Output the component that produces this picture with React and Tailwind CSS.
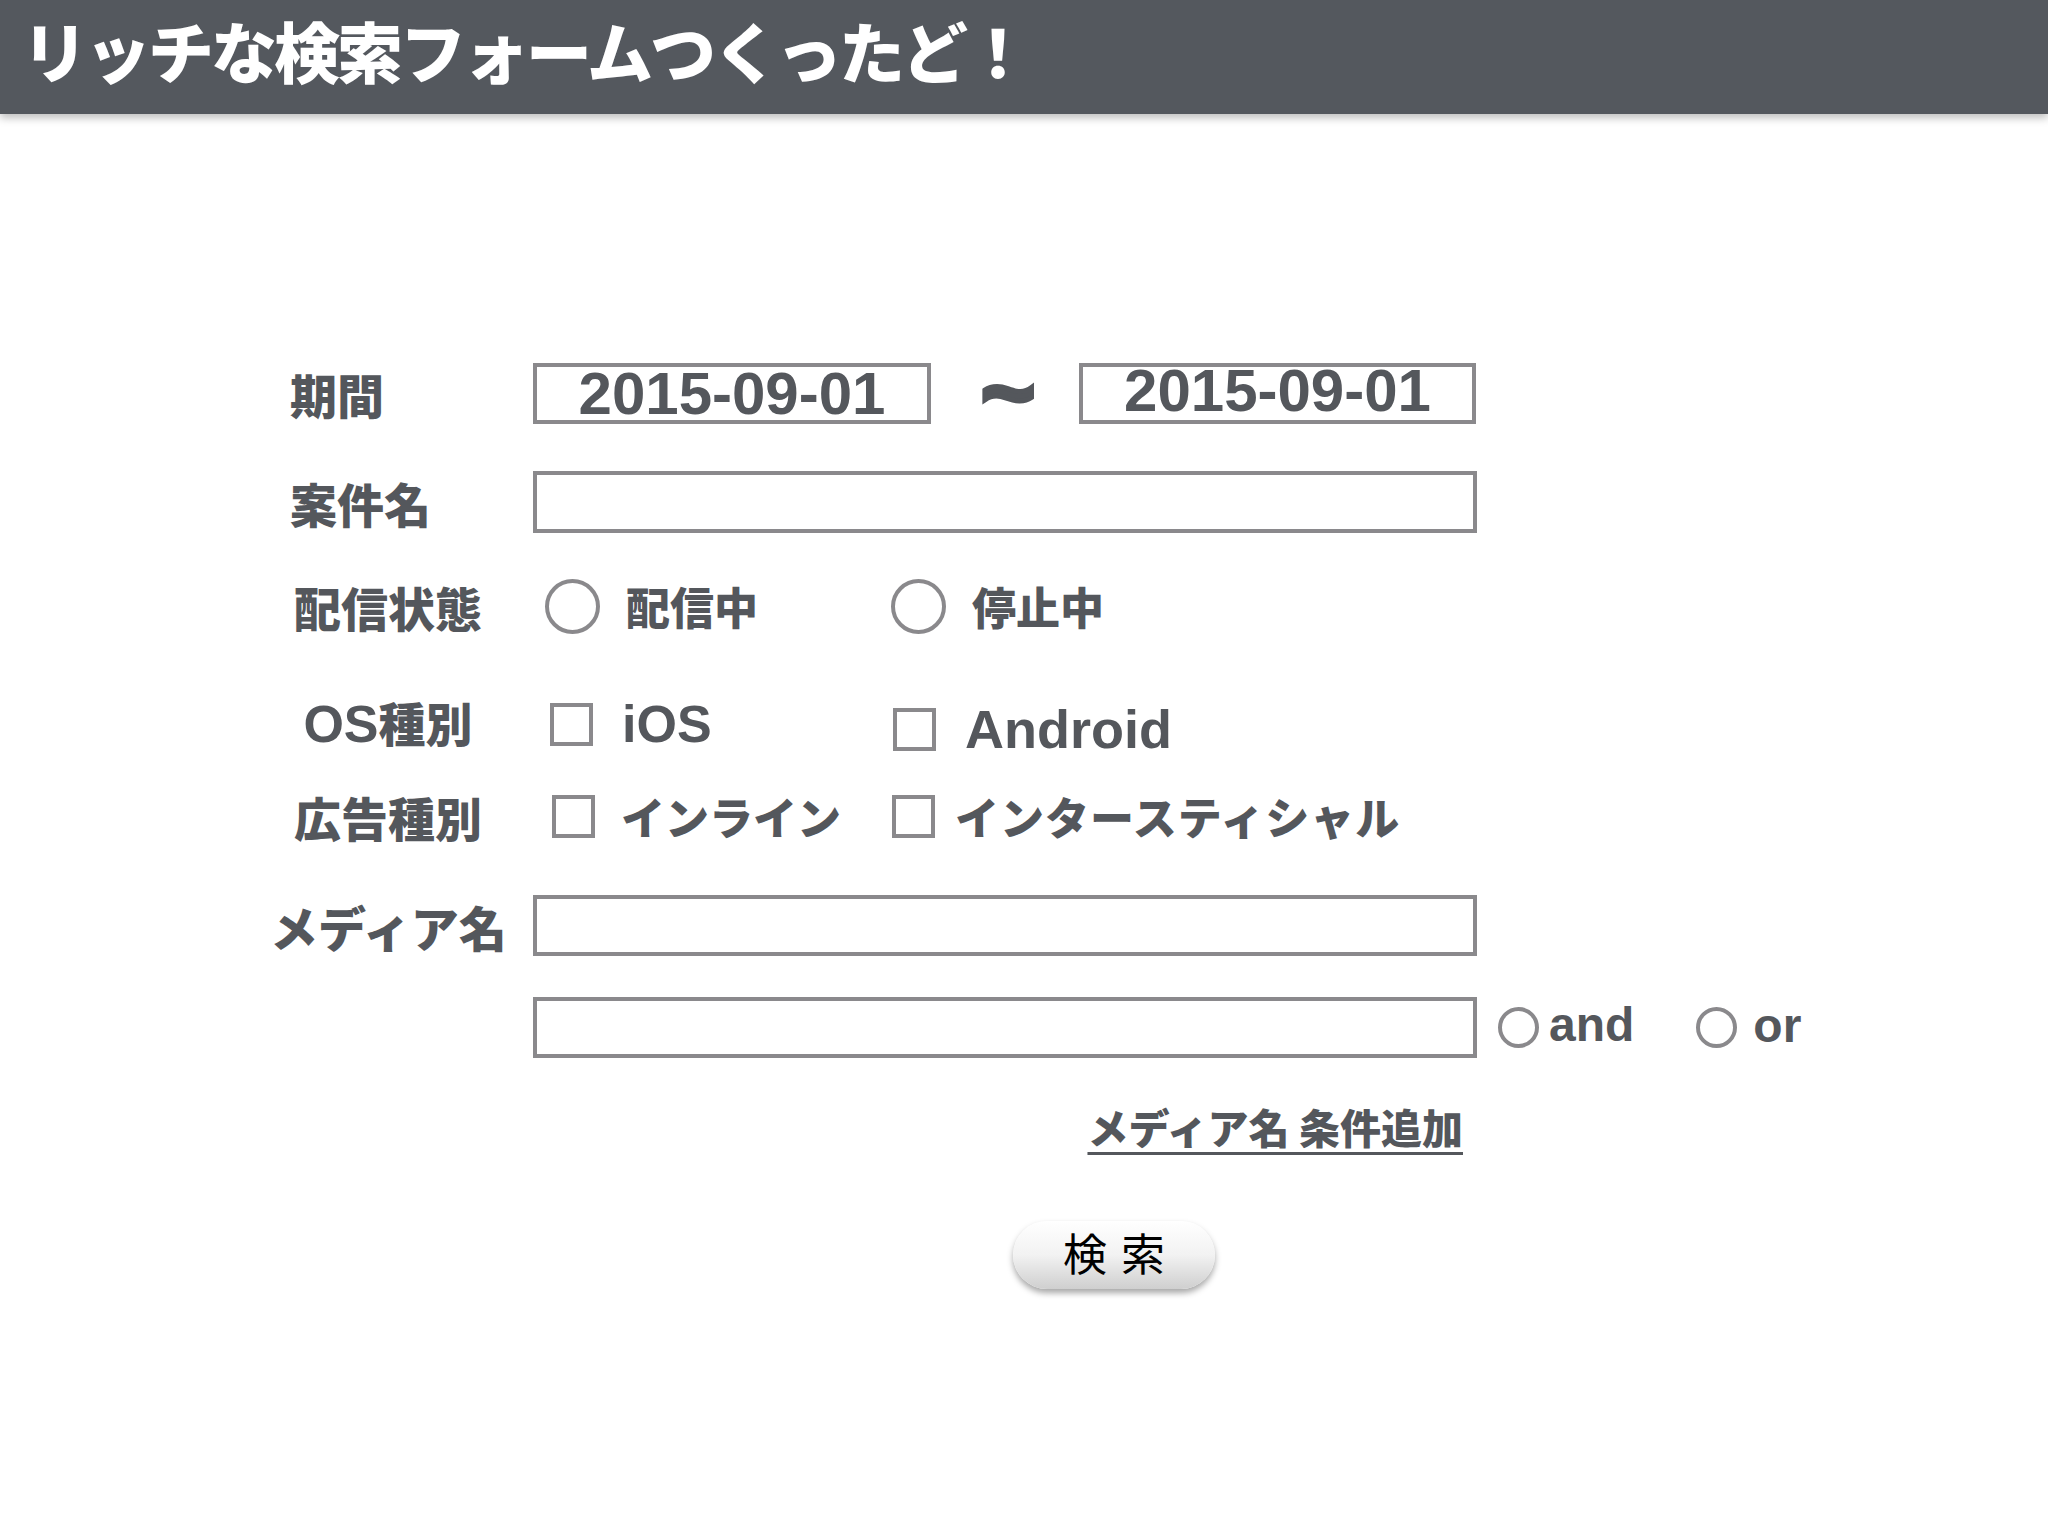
const jp = { fontFamily: '"Noto Sans CJK JP", "Noto Sans", sans-serif' }
const latin = { fontFamily: '"Liberation Sans", Arial, sans-serif' }

function Radio({ size = 'lg' }) {
  return (
    <span
      className={
        size === 'lg'
          ? 'inline-block w-[55px] h-[55px] rounded-full border-[4px] border-[#8a898c] bg-white shrink-0'
          : 'inline-block w-[41px] h-[41px] rounded-full border-[4px] border-[#8a898c] bg-white shrink-0'
      }
    />
  )
}

function Check() {
  return <span className="inline-block w-[43px] h-[43px] border-[4px] border-[#8a898c] bg-white shrink-0" />
}

function Field({ className = '' }) {
  return <div className={`h-[61px] border-[4px] border-[#8a898c] bg-white ${className}`} />
}

function Label({ children, align = 'center' }) {
  return (
    <div className="w-[263px] shrink-0">
      <div
        className={
          align === 'left'
            ? 'w-[236px] pl-[20px] text-left text-[47px] font-black leading-none'
            : 'w-[236px] text-center text-[47px] font-black leading-none'
        }
      >
        {children}
      </div>
    </div>
  )
}

export default function App() {
  return (
    <div className="min-h-[1536px] bg-white text-[#54575c]" style={jp}>
      <header className="h-[114px] bg-[#54585e] shadow-[0_4px_8px_rgba(0,0,0,0.25)] flex items-center pl-[22px]">
        <h1 className="text-white font-black text-[66px] leading-[1.2] tracking-[-3px] -mt-[14px]">
          リッチな検索フォームつくったど！
        </h1>
      </header>

      <form className="pl-[270px] flex flex-col font-black" onSubmit={e => e.preventDefault()}>
        {/* 期間 */}
        <div className="mt-[249px] h-[61px] flex items-center">
          <Label align="left">期間</Label>
          <div
            className="w-[398px] h-[61px] border-[4px] border-[#8a898c] flex items-center justify-center text-[60px] font-bold leading-none"
            style={latin}
          >
            2015-09-01
          </div>
          <div className="w-[148px] flex justify-center pl-[6px]" style={latin}>
            <span className="text-[92px] font-bold leading-none -mt-[4px] [-webkit-text-stroke:5px_#54575c]">~</span>
          </div>
          <div
            className="w-[397px] h-[61px] border-[4px] border-[#8a898c] flex items-center justify-center text-[60px] font-bold leading-none pb-[5px]"
            style={latin}
          >
            2015-09-01
          </div>
        </div>

        {/* 案件名 */}
        <div className="mt-[47px] h-[62px] flex items-center">
          <Label align="left">案件名</Label>
          <Field className="w-[944px] h-[62px]" />
        </div>

        {/* 配信状態 */}
        <div className="mt-[45px] h-[56px] flex items-center">
          <Label>配信状態</Label>
          <div className="w-[360px] pl-[12px] flex items-center gap-[26px]">
            <Radio />
            <span className="text-[44px]">配信中</span>
          </div>
          <div className="flex items-center gap-[26px] -ml-[2px]">
            <Radio />
            <span className="text-[44px]">停止中</span>
          </div>
        </div>

        {/* OS種別 */}
        <div className="mt-[62px] h-[56px] flex items-center">
          <Label>
            <span className="font-bold text-[52px]" style={latin}>OS</span>種別
          </Label>
          <div className="w-[360px] pl-[17px] flex items-center gap-[29px]">
            <Check />
            <span className="text-[52px] font-bold leading-none" style={latin}>iOS</span>
          </div>
          <div className="flex items-center gap-[29px] translate-y-[5px]">
            <Check />
            <span className="text-[54px] font-bold leading-none" style={latin}>Android</span>
          </div>
        </div>

        {/* 広告種別 */}
        <div className="mt-[36px] h-[56px] flex items-center">
          <Label>広告種別</Label>
          <div className="w-[360px] pl-[19px] flex items-center gap-[26px]">
            <Check />
            <span className="text-[44px]">インライン</span>
          </div>
          <div className="flex items-center gap-[20px] -ml-[1px]">
            <Check />
            <span className="text-[44px] tracking-[1px]">インタースティシャル</span>
          </div>
        </div>

        {/* メディア名 */}
        <div className="mt-[51px] h-[61px] flex items-center">
          <div className="w-[263px] shrink-0 text-left text-[48px] leading-none">メディア名</div>
          <Field className="w-[944px]" />
        </div>

        <div className="mt-[41px] h-[61px] flex items-center">
          <div className="w-[263px]" />
          <Field className="w-[944px]" />
          <div className="ml-[21px] flex items-center gap-[10px]">
            <Radio size="sm" />
            <span className="text-[48px] font-bold leading-none -mt-[6px]" style={latin}>and</span>
          </div>
          <div className="ml-[62px] flex items-center gap-[16px]">
            <Radio size="sm" />
            <span className="text-[48px] font-bold leading-none -mt-[4px]" style={latin}>or</span>
          </div>
        </div>

        <div className="mt-[43px] h-[50px] flex items-center">
          <div className="w-[263px]" />
          <div className="w-[930px] flex justify-end">
            <a href="#" className="text-[41px] leading-none underline underline-offset-[8px] decoration-[3px] text-[#54575c]">
              メディア名 条件追加
            </a>
          </div>
        </div>

        <div className="mt-[70px] flex">
          <div className="w-[743px]" />
          <button
            type="submit"
            className="w-[202px] h-[68px] rounded-full bg-gradient-to-b from-white via-[#f2f2f2] to-[#cfcfcf] shadow-[0_4px_6px_rgba(0,0,0,0.35)] text-black font-normal text-[44px] leading-none tracking-[14px] pl-[14px] pb-[6px]"
          >
            検索
          </button>
        </div>
      </form>
    </div>
  )
}
